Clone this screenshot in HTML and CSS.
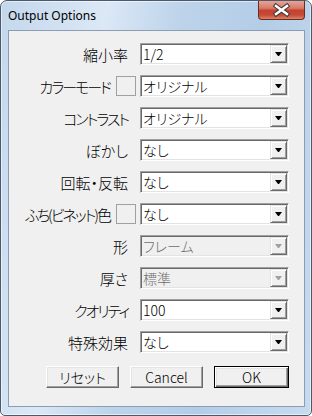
FILE: index.html
```html
<!DOCTYPE html>
<html lang="ja">
  <head>
    <meta charset="UTF-8" />
    <title>Output Options</title>
    <link rel="stylesheet" href="styles.css">
  </head>
  <body>
    <div class="window">
      <div class="titlebar">
        <span class="title">Output Options</span>
        <div class="close">
          <svg width="47" height="19" viewBox="0 0 47 19">
            <path d="M18 6 L29 14 M29 6 L18 14" stroke="#3a3a3a" stroke-width="4.5" stroke-linecap="square" fill="none" />
            <path d="M18 6 L29 14 M29 6 L18 14" stroke="#fff" stroke-width="2.5" stroke-linecap="square" fill="none" />
          </svg>
        </div>
      </div>
      <div class="client">
        <div class="rows">
          <div class="row">
            <div class="label">縮小率</div>
            <div class="combo"><span class="value">1/2</span><span class="drop"><i class="arrow"></i></span></div>
          </div>
          <div class="row">
            <div class="label swatched"><span class="tight">カラーモード</span><span class="swatch"></span></div>
            <div class="combo"><span class="value">オリジナル</span><span class="drop"><i class="arrow"></i></span></div>
          </div>
          <div class="row">
            <div class="label"><span class="tight">コントラスト</span></div>
            <div class="combo"><span class="value">オリジナル</span><span class="drop"><i class="arrow"></i></span></div>
          </div>
          <div class="row">
            <div class="label">ぼかし</div>
            <div class="combo"><span class="value">なし</span><span class="drop"><i class="arrow"></i></span></div>
          </div>
          <div class="row">
            <div class="label">回転・反転</div>
            <div class="combo"><span class="value">なし</span><span class="drop"><i class="arrow"></i></span></div>
          </div>
          <div class="row">
            <div class="label swatched"><span class="tight">ふち(ビネット)色</span><span class="swatch"></span></div>
            <div class="combo"><span class="value">なし</span><span class="drop"><i class="arrow"></i></span></div>
          </div>
          <div class="row">
            <div class="label">形</div>
            <div class="combo disabled"><span class="value">フレーム</span><span class="drop"><i class="arrow"></i></span></div>
          </div>
          <div class="row">
            <div class="label">厚さ</div>
            <div class="combo disabled"><span class="value">標準</span><span class="drop"><i class="arrow"></i></span></div>
          </div>
          <div class="row">
            <div class="label"><span class="tight">クオリティ</span></div>
            <div class="combo"><span class="value">100</span><span class="drop"><i class="arrow"></i></span></div>
          </div>
          <div class="row">
            <div class="label">特殊効果</div>
            <div class="combo"><span class="value">なし</span><span class="drop"><i class="arrow"></i></span></div>
          </div>
        </div>
        <div class="buttons">
          <div class="btn">リセット</div>
          <div class="btn">Cancel</div>
          <div class="btn default">OK</div>
        </div>
      </div>
    </div>
  </body>
</html>
```

FILE: styles.css
```css
body {
  margin: 0;
  font-family: "Noto Sans CJK JP", sans-serif;
  font-weight: 300;
  color: #000;
}
.window {
  width: 312px;
  height: 416px;
  box-sizing: border-box;
  border: 1px solid #4a5a6c;
  border-radius: 7px 7px 5px 5px;
  background: linear-gradient(100deg, #c3d7ec 0%, #dbe8f6 28%, #bcd3ea 48%, #b4cde7 70%, #c7dbef 100%);
  box-shadow: inset 0 0 0 1px rgba(255, 255, 255, 0.55);
  padding: 0 6px 8px 7px;
  display: flex;
  flex-direction: column;
}
.titlebar {
  height: 29px;
  display: flex;
  align-items: flex-start;
  justify-content: space-between;
}
.title {
  font-family: "Noto Sans", sans-serif;
  font-weight: 400;
  font-size: 12px;
  line-height: 29px;
  color: #000;
}
.close {
  width: 47px;
  height: 19px;
  box-sizing: border-box;
  border: 1px solid #6b2b22;
  border-top: none;
  border-radius: 0 0 4px 4px;
  background: linear-gradient(#e6a497 0%, #d77a68 40%, #c4412f 52%, #c54a36 78%, #de8466 100%);
  overflow: hidden;
}
.close svg {
  display: block;
  margin: -1px 0 0 -1px;
}
.client {
  flex: 1;
  background: #f0f0f0;
  border: 1px solid #8a9db2;
  padding: 12px 15px 0 0;
  display: flex;
  flex-direction: column;
}
.rows {
  display: flex;
  flex-direction: column;
  gap: 10px;
}
.row {
  display: grid;
  grid-template-columns: 1fr 149px;
  column-gap: 4px;
  height: 22px;
}
.label {
  display: flex;
  justify-content: flex-end;
  align-items: center;
  gap: 6px;
  padding-right: 8px;
  font-size: 15px;
  font-feature-settings: "palt";
  white-space: nowrap;
}
.label.swatched {
  padding-right: 0;
}
.tight {
  letter-spacing: -2px;
}
.swatch {
  width: 20px;
  height: 20px;
  box-sizing: border-box;
  border: 1px solid #a0a0a0;
  background: #f0f0f0;
}
.combo {
  box-sizing: border-box;
  height: 22px;
  background: #fff;
  border: 1px solid;
  border-color: #a0a0a0 #fff #fff #a0a0a0;
  box-shadow: inset 1px 1px 0 #696969, inset -1px -1px 0 #e3e3e3;
  padding: 1px;
  display: flex;
  align-items: center;
}
.value {
  flex: 1;
  padding-left: 1px;
  font-size: 14px;
  line-height: 18px;
  font-feature-settings: "palt";
  white-space: nowrap;
}
.drop {
  width: 17px;
  height: 18px;
  box-sizing: border-box;
  background: #f0f0f0;
  border: 1px solid;
  border-color: #e3e3e3 #696969 #696969 #e3e3e3;
  box-shadow: inset 1px 1px 0 #fff, inset -1px -1px 0 #a0a0a0;
  display: flex;
  align-items: center;
  justify-content: center;
}
.arrow {
  width: 1px;
  height: 0;
  border-left: 3px solid transparent;
  border-right: 3px solid transparent;
  border-top: 4px solid #000;
}
.combo.disabled {
  background: #f0f0f0;
}
.combo.disabled .value {
  color: #6d6d6d;
}
.combo.disabled .arrow {
  border-top-color: #a0a0a0;
}
.buttons {
  display: flex;
  justify-content: flex-end;
  gap: 11px;
  margin-top: 13px;
}
.btn {
  width: 73px;
  height: 22px;
  box-sizing: border-box;
  background: #f0f0f0;
  border: 1px solid;
  border-color: #fff #696969 #696969 #fff;
  box-shadow: inset -1px -1px 0 #a0a0a0, inset 1px 1px 0 #e3e3e3;
  font-size: 14px;
  font-feature-settings: "palt";
  display: flex;
  align-items: center;
  justify-content: center;
}
.btn.default {
  width: 75px;
  border-color: #000;
  box-shadow: inset 1px 1px 0 #fff, inset -1px -1px 0 #696969, inset -2px -2px 0 #a0a0a0, inset 2px 2px 0 #e3e3e3;
}
```
